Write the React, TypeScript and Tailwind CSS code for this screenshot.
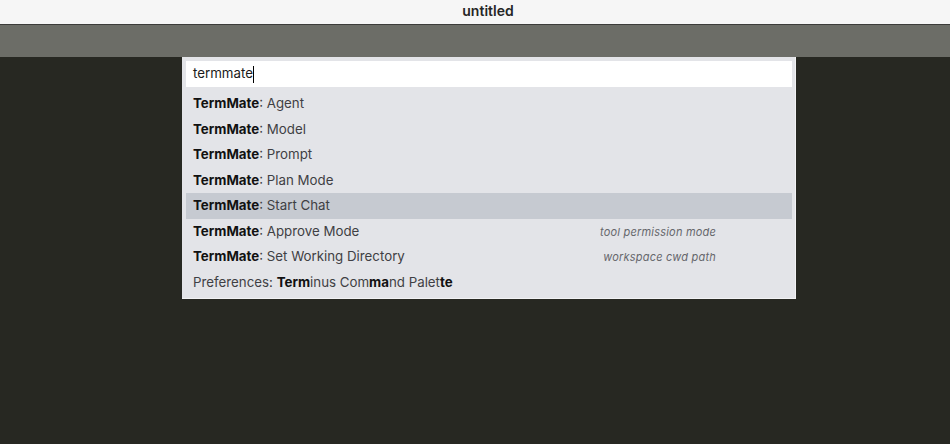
import React from "react"

type Part = { text: string, bold?: boolean }

type Command = {
    parts: Part[]
    hint?: string
    selected?: boolean
}

const commands: Command[] = [
    { parts: [{ text: "TermMate", bold: true }, { text: ": Agent" }] },
    { parts: [{ text: "TermMate", bold: true }, { text: ": Model" }] },
    { parts: [{ text: "TermMate", bold: true }, { text: ": Prompt" }] },
    { parts: [{ text: "TermMate", bold: true }, { text: ": Plan Mode" }] },
    { parts: [{ text: "TermMate", bold: true }, { text: ": Start Chat" }], selected: true },
    { parts: [{ text: "TermMate", bold: true }, { text: ": Approve Mode" }], hint: "tool permission mode" },
    { parts: [{ text: "TermMate", bold: true }, { text: ": Set Working Directory" }], hint: "workspace cwd path" },
    {
        parts: [
            { text: "Preferences: " },
            { text: "Term", bold: true },
            { text: "inus Com" },
            { text: "ma", bold: true },
            { text: "nd Palet" },
            { text: "te", bold: true },
        ],
    },
]

function CommandRow({ cmd }: { cmd: Command }) {
    return (
        <div className={`h-[25.5px] flex items-center justify-between pl-[7px] pr-[76px] pt-[1px] ${cmd.selected ? "bg-[#c6cad1]" : ""}`}>
            <span className="text-[13.3px] text-[#3f3f44] whitespace-pre">
                {cmd.parts.map((p, i) => (
                    <span key={i} className={p.bold ? "font-bold text-[#111]" : ""}>{p.text}</span>
                ))}
            </span>
            {cmd.hint && <span className="italic text-[11px] text-[#66676c] tracking-[0.2px]">{cmd.hint}</span>}
        </div>
    )
}

export default function App() {
    return (
        <div className="w-[950px] h-[444px] flex flex-col bg-[#272822] overflow-hidden" style={{ fontFamily: "Inter, 'Noto Sans', sans-serif" }}>
            {/* window title */}
            <div className="h-[25px] shrink-0 bg-[#f6f6f6] border-b border-[#3c3c3a] flex items-center justify-center pl-[26px]">
                <span className="text-[14px] font-semibold text-[#262626] -translate-y-[2px]">untitled</span>
            </div>

            {/* toolbar strip */}
            <div className="h-[32px] shrink-0 bg-[#6c6d67]" />

            {/* command palette */}
            <div className="ml-[182px] w-[614px] bg-[#e3e4e8] border-r border-b border-[#f2f2f4] p-[4px] pr-[3px] pb-[3px] flex flex-col">
                <div className="h-[26px] bg-white flex items-center pl-[7px] text-[13.3px] text-[#1a1a1a]">
                    termmate<span className="w-px h-[17px] bg-black" />
                </div>
                <div className="mt-[4px] flex flex-col">
                    {commands.map((c, i) => (
                        <CommandRow key={i} cmd={c} />
                    ))}
                </div>
            </div>
        </div>
    )
}
